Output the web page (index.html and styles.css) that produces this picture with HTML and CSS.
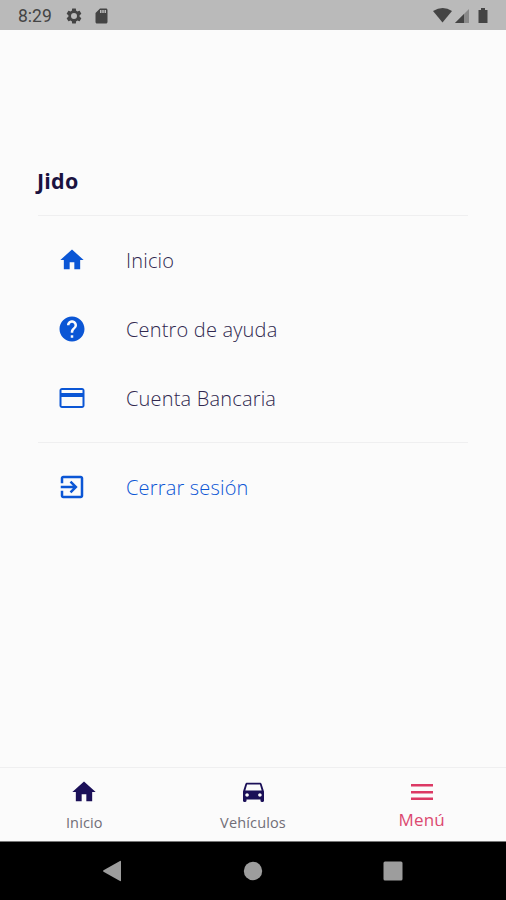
FILE: index.html
```html
<!DOCTYPE html>
<html lang="es">
<head>
<meta charset="utf-8">
<title>Jido</title>
<link rel="stylesheet" href="styles.css">
</head>
<body>
<div class="screen">
  <header class="status">
    <span class="clock">8:29</span>
    <svg class="gear" viewBox="0 0 24 24"><path fill-rule="evenodd" d="M19.43 12.98c.04-.32.07-.64.07-.98s-.03-.66-.07-.98l2.11-1.65c.19-.15.24-.42.12-.64l-2-3.46c-.12-.22-.39-.3-.61-.22l-2.49 1c-.52-.4-1.08-.73-1.69-.98l-.38-2.65C14.46 2.18 14.25 2 14 2h-4c-.25 0-.46.18-.49.42l-.38 2.65c-.61.25-1.17.59-1.69.98l-2.49-1c-.23-.09-.49 0-.61.22l-2 3.46c-.13.22-.07.49.12.64l2.11 1.65c-.04.32-.07.65-.07.98s.03.66.07.98l-2.11 1.65c-.19.15-.24.42-.12.64l2 3.46c.12.22.39.3.61.22l2.49-1c.52.4 1.08.73 1.69.98l.38 2.65c.03.24.24.42.49.42h4c.25 0 .46-.18.49-.42l.38-2.65c.61-.25 1.17-.59 1.69-.98l2.49 1c.23.09.49 0 .61-.22l2-3.46c.12-.22.07-.49-.12-.64zM12 16a4 4 0 1 1 0-8 4 4 0 0 1 0 8z"/></svg>
    <svg class="sd" viewBox="0 0 24 24"><path d="M18 2h-8L4.020 8 4 20c0 1.100.9 2 2 2h12c1.100 0 2-.9 2-2V4c0-1.100-.9-2-2-2zm-6 6h-2V4h2zm3 0h-2V4h2zm3 0h-2V4h2z"/></svg>
    <svg class="signals" viewBox="0 0 58 18"><path d="M0 4Q10-2 19 4L9.500 15.500z"/><path d="M36 2v14H22z" opacity=".4"/><path d="M31 7v9h-9z"/><path d="M48 1h4v2h2.500v13h-9V3H48z"/></svg>
  </header>

  <main class="content">
    <h1 class="title">Jido</h1>
    <ul class="menu">
      <li class="item"><svg class="icon home" viewBox="0 0 24 24"><path d="M10 20v-6h4v6h5v-8h3L12 3 2 12h3v8z"/></svg><span>Inicio</span></li>
      <li class="item"><svg class="icon" viewBox="0 0 24 24"><path d="M12 2C6.480 2 2 6.480 2 12s4.480 10 10 10 10-4.480 10-10S17.520 2 12 2zm1 17h-2v-2h2v2zm2.070-7.750l-.9.920C13.450 12.900 13 13.500 13 15h-2v-.5c0-1.100.45-2.100 1.170-2.830l1.240-1.260c.37-.36.59-.86.59-1.410 0-1.100-.9-2-2-2s-2 .9-2 2H8c0-2.210 1.790-4 4-4s4 1.790 4 4c0 .88-.36 1.680-.93 2.250z"/></svg><span>Centro de ayuda</span></li>
      <li class="item"><svg class="icon" viewBox="0 0 24 24"><path d="M20 4H4c-1.110 0-1.990.89-1.990 2L2 18c0 1.110.89 2 2 2h16c1.110 0 2-.89 2-2V6c0-1.110-.89-2-2-2zm.4 14.400H3.600v-7.200h16.800v7.200zm0-10.400H3.600V5.600h16.800V8z"/></svg><span>Cuenta Bancaria</span></li>
    </ul>
    <div class="item logout"><svg class="icon" viewBox="0 0 24 24"><path d="M10.090 15.590L11.500 17l5-5-5-5-1.410 1.410L12.670 11H3v2h9.670l-2.580 2.590zM19 3H5c-1.110 0-2 .9-2 2v4h2V5h14v14H5v-4H3v4c0 1.100.89 2 2 2h14c1.100 0 2-.9 2-2V5c0-1.100-.9-2-2-2z"/></svg><span>Cerrar sesión</span></div>
  </main>

  <nav class="tabs">
    <div class="tab"><svg viewBox="0 0 24 24"><path d="M10 20v-6h4v6h5v-8h3L12 3 2 12h3v8z"/></svg><span>Inicio</span></div>
    <div class="tab"><svg class="car" viewBox="0 0 24 24"><path d="M18.920 5.010C18.720 4.420 18.160 4 17.500 4h-11c-.66 0-1.210.42-1.420 1.010L3 11.500v8c0 .55.45 1 1 1h1c.55 0 1-.45 1-1v-1h12v1c0 .55.45 1 1 1h1c.55 0 1-.45 1-1v-8l-2.080-6.490zM6.500 16c-.83 0-1.500-.67-1.500-1.500S5.670 13 6.500 13s1.500.67 1.500 1.500S7.330 16 6.500 16zm11 0c-.83 0-1.500-.67-1.500-1.500s.67-1.500 1.500-1.500 1.500.67 1.500 1.500-.67 1.500-1.500 1.500zM5 10.700l1.500-5.200h11l1.500 5.200H5z"/></svg><span>Vehículos</span></div>
    <div class="tab active"><svg viewBox="0 0 28 28"><path d="M3 6h22v2.500H3zM3 13h22v2.500H3zM3 19.500h22V22H3z"/></svg><span>Menú</span></div>
  </nav>

  <footer class="system">
    <div><svg viewBox="0 0 24 24"><path d="M20 2.500v19q0 1-1 .5L2.500 12.800q-1-.8 0-1.600L19 2q1-.5 1 .5z"/></svg></div>
    <div><svg viewBox="0 0 24 24"><circle cx="12" cy="12" r="9.200"/></svg></div>
    <div><svg viewBox="0 0 24 24"><rect x="2.500" y="2.500" width="19" height="19" rx="1.500"/></svg></div>
  </footer>
</div>
</body>
</html>
```
FILE: styles.css
```css
* { box-sizing: border-box; }
body { margin: 0; font-family: "Open Sans", "Noto Sans", sans-serif; background: #fbfbfb; }
svg { display: block; flex: none; }
.screen { display: flex; flex-direction: column; width: 506px; height: 900px; overflow: hidden; }

.status { display: flex; align-items: center; height: 30px; padding: 1px 15px 0 18px; background: #bababa; color: #444; fill: #444; }
.clock { width: 47px; font: 400 17.5px/28px Roboto, sans-serif; }
.gear { width: 18px; height: 18px; }
.sd { width: 19px; height: 18px; margin-left: 9px; }
.signals { width: 58px; height: 18px; margin-left: auto; }

.content { flex: 1; padding: 136px 38px 0; }
.title { margin: 0 0 0 -1px; height: 49px; font-size: 21.5px; line-height: 30px; font-weight: 700; letter-spacing: .2px; color: #1b1240; }
.menu { list-style: none; margin: 0; padding: 10px 0 9px; border: 1px solid #efeff0; border-width: 1px 0; }
.item { display: flex; align-items: center; height: 69px; padding-left: 19px; font-size: 20px; letter-spacing: .18px; font-weight: 340; color: #30284f; }
.icon { width: 30px; height: 30px; margin: 0 39px 1px 0; fill: #0b56d5; }
.icon.home { width: 28px; height: 28px; margin: 0 40px 1px 1px; }
.logout { margin-top: 10px; color: #0b56d5; }

.tabs { display: flex; height: 74px; border-top: 1px solid #efeff0; }
.tab { flex: 1; display: flex; flex-direction: column; align-items: center; padding-top: 10px; font-size: 14.5px; line-height: 20px; letter-spacing: .15px; font-weight: 400; color: #716e77; fill: #1b1058; }
.tab svg { width: 28px; height: 28px; margin-bottom: 7px; }
.tab .car { width: 29px; }
.tab.active { color: #dc4970; fill: #dc3964; font-size: 17px; }
.tab.active svg { margin-bottom: 4px; }

.system { display: flex; justify-content: center; align-items: center; height: 59px; border-top: 1px solid #777; background: #000; fill: #9d9d9d; }
.system div { width: 140px; display: flex; justify-content: center; }
.system svg { width: 24px; height: 24px; }
```
